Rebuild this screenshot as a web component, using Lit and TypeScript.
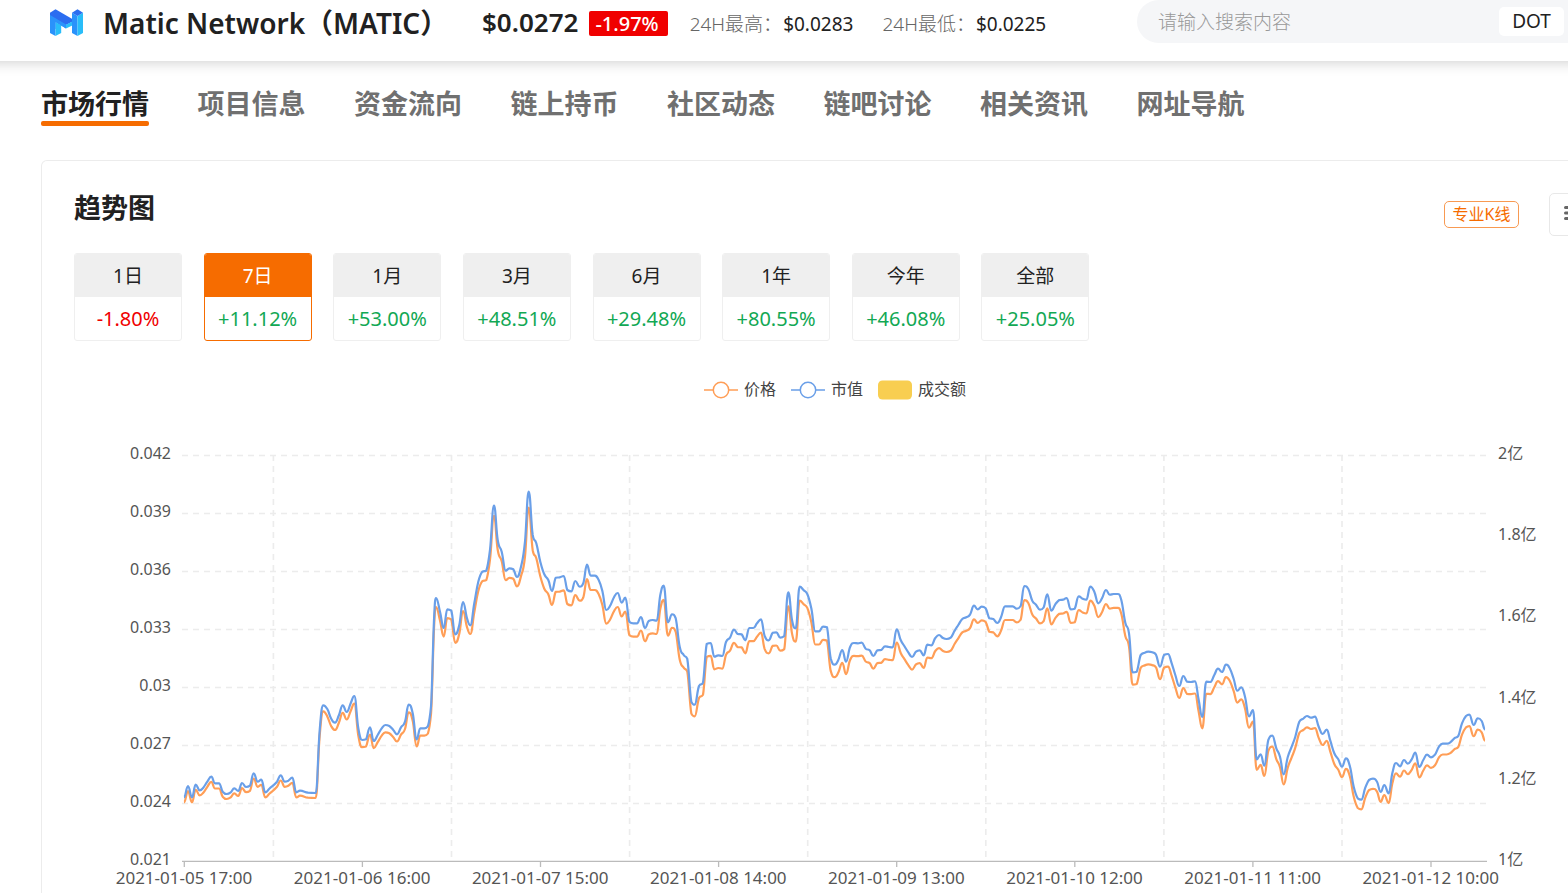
import { LitElement, html, svg, css } from "lit";
import { customElement, state } from "lit/decorators.js";
import { classMap } from "lit/directives/class-map.js";

type Run = { x: number; y: number; pts: number[] };

/* Market-cap samples, grouped in runs. Each run has an origin in chart
   units; its pairs are thirds of a chart unit from that origin. */
const RUNS: Run[] = [
  { x: 110, y: 640, pts: [222,472,234,438,246,472,257,434,269,451,280,443,292,425,304,410,315,430,327,430,338,455,350,462,362,457,373,445,385,453,396,429,408,441,420,437,431,400,443,425,454,419,466,457,478,446,501,425,512,406,524,425,535,422,547,413,559,457,570,452,594,458,617,459,629,270,640,196,652,207,663,235,675,248,687,225,698,196,710,216,722,190,733,168,745,265,756,300,768,298,780,262,791,303,803,285,815,265,826,255,838,258,850,270,861,283,873,262,885,245,896,194,908,220,920,298,931,265,943,265,954,258,963,200] },
  { x: 420, y: 470, pts: [36,640,42,450,48,384,60,425,71,474,82,418,94,422,106,493,118,465,129,396,141,445,151,466,163,400,175,335,187,305,199,302,210,240,222,107,233,210,245,245,257,302,268,295,280,298,291,321,303,290,315,215,326,65,338,195,349,220,361,275,373,313,385,330,396,363,407,323,419,322,431,318,442,360,454,364,466,333,479,350,490,340,501,284,512,317,524,317,536,330,547,362,559,420,570,408,582,382,593,369,605,398,616,383,628,455,640,460,651,460,663,441,675,474,686,453,698,450,710,452,721,375,731,347,744,457,756,433,767,445,779,530,791,555] },
  { x: 640, y: 560, pts: [142,297,154,425,164,434,177,378,189,368,200,252,212,249,223,290,235,286,247,288,258,246,270,233,282,209,293,222,305,223,316,241,328,204,340,204,351,190,363,178,374,228,386,241,398,218,409,217,421,233,433,228,445,97,456,180,467,205,479,80,491,91,502,102,514,145,526,214,537,214,549,200,561,202,572,295,584,314,595,300,607,270,618,305,630,262,642,249,654,250,665,248,677,266,689,271,700,288,712,271,724,270,735,259,747,261,758,262] },
  { x: 880, y: 560, pts: [50,208,62,240,73,258,85,277,96,291,108,275,119,271,131,286,142,254,154,256,166,234,177,225,189,234,200,237,212,233,224,212,235,195,247,177,259,172,270,164,282,137,293,148,305,140,317,145,328,175,340,177,352,189,363,172,375,139,398,139,410,146,422,138,433,78,445,87,457,122,468,134,480,149,491,142,502,103,514,152,526,133,538,120,549,119,560,114,572,148,584,146,596,109,608,116,619,119,631,80,643,95,655,130,666,115,678,90,689,104,701,102,713,102,724,120,736,188] },
  { x: 1120, y: 620, pts: [27,40,38,157,50,155,62,105,74,98,85,95,97,97,108,104,120,140,132,105,144,102,155,130,166,165,178,198,190,168,201,185,213,186,225,184,236,240,247,291,259,185,271,186,283,165,294,146,306,156,318,134,329,145,341,177,352,212,364,202,375,230,387,289,399,270,410,418,422,403,433,437,445,360,457,347,469,385,480,410,491,463,503,412,515,380,526,350,538,305,550,296,561,288,573,293,585,290,596,320,608,342,620,329,631,362,643,400,655,418] },
  { x: 1330, y: 680, pts: [36,260,48,235,60,260,71,320,83,355,94,359,106,323,117,300,129,296,141,305,152,336,163,315,176,340,187,280,198,249,210,259,222,240,233,251,245,238,256,218,268,261,280,240,291,224,303,232,315,224,327,200,338,191,350,191,361,187,373,175,385,168,396,130,408,108,418,104,431,135,443,115,455,123,465,148] },
];

const CAP: [number, number][] = RUNS.flatMap((r) =>
  Array.from({ length: r.pts.length / 2 }, (_, i): [number, number] => [
    r.x + r.pts[2 * i] / 3,
    r.y + r.pts[2 * i + 1] / 3,
  ])
);

/* Both axes reach zero at the same depth, so price is cap over supply. */
const ZERO = 1267;
const supplyRatio = (x: number) => (x < 326 ? 0.9894 : x < 522 ? 0.9865 : 0.9793);
const PRICE = CAP.map(([x, y]): [number, number] => [x, ZERO - (ZERO - y) * supplyRatio(x)]);

/* Rounded curve through the samples: flat at each peak, and with handles
   clamped to the segment so that no peak overshoots its sample. */
function smooth(p: [number, number][]): string {
  const n = p.length;
  const m = p.map((q, i) => {
    if (i === 0 || i === n - 1) return 0;
    const [a, b] = [p[i - 1], p[i + 1]];
    return (q[1] - a[1]) * (b[1] - q[1]) <= 0 ? 0 : (b[1] - a[1]) / (b[0] - a[0]);
  });
  let d = `M${p[0][0].toFixed(1)} ${p[0][1].toFixed(1)}`;
  for (let i = 1; i < n; i++) {
    const [a, b] = [p[i - 1], p[i]];
    const h = (b[0] - a[0]) * 0.45;
    const clamp = (v: number) => Math.max(Math.min(a[1], b[1]), Math.min(Math.max(a[1], b[1]), v));
    d += `C${[a[0] + h, clamp(a[1] + m[i - 1] * h), b[0] - h, clamp(b[1] - m[i] * h), b[0], b[1]]
      .map((v) => v.toFixed(1)).join(" ")}`;
  }
  return d;
}

const CAP_PATH = smooth(CAP);
const PRICE_PATH = smooth(PRICE);

const TABS = ["市场行情", "项目信息", "资金流向", "链上持币", "社区动态", "链吧讨论", "相关资讯", "网址导航"];
const RANGES: [string, string][] = [
  ["1日", "-1.80%"], ["7日", "+11.12%"], ["1月", "+53.00%"], ["3月", "+48.51%"],
  ["6月", "+29.48%"], ["1年", "+80.55%"], ["今年", "+46.08%"], ["全部", "+25.05%"],
];
const LEFT_AXIS = ["0.042", "0.039", "0.036", "0.033", "0.03", "0.027", "0.024", "0.021"];
const RIGHT_AXIS = ["2亿", "1.8亿", "1.6亿", "1.4亿", "1.2亿", "1亿"];
const DATES = [
  "2021-01-05 17:00", "2021-01-06 16:00", "2021-01-07 15:00", "2021-01-08 14:00",
  "2021-01-09 13:00", "2021-01-10 12:00", "2021-01-11 11:00", "2021-01-12 10:00",
];

@customElement("trend-chart")
export class TrendChart extends LitElement {
  static styles = css`
    :host { display: block; }
    .legend { display: flex; justify-content: center; gap: 15px; height: 24px; }
    .key { display: flex; align-items: center; gap: 6px; padding: 0; border: 0; background: none; font: inherit; font-size: 16px; line-height: 24px; color: #444; cursor: pointer; }
    .mark { width: 34px; height: 20px; margin-top: 2px; }
    .plot { display: block; width: 100%; height: auto; }
    .label { font-size: 16px; fill: #555; }
    .date { font-size: 17px; }
    .end { text-anchor: end; }
    .mid { text-anchor: middle; }
    .grid { stroke: #ececec; stroke-width: 1.6; stroke-dasharray: 6 5; fill: none; }
    .axis { stroke: #bbb; stroke-width: 1.3; }
    .line { fill: none; stroke-width: 2.2; stroke-linejoin: round; }
    .price { stroke: #ff9e57; }
    .cap { stroke: #6a9fe8; }
  `;

  private lineKey(color: string) {
    return html`<svg class="mark" viewBox="0 0 34 20" fill="none" stroke=${color} stroke-width="1.5" aria-hidden="true">
      <path d="M0 10H9M25 10H34" /><circle cx="17" cy="10" r="7.7" />
    </svg>`;
  }

  render() {
    return html`
      <div class="legend">
        <button class="key">${this.lineKey("#ff9e57")}价格</button>
        <button class="key">${this.lineKey("#6a9fe8")}市值</button>
        <button class="key">
          <svg class="mark" viewBox="0 0 34 20" aria-hidden="true"><rect y="0.5" width="34" height="19" rx="4.5" fill="#f8ce51" /></svg>成交额
        </button>
      </div>
      <svg class="plot" viewBox="42 401 1586 492" role="img" aria-label="趋势图">
        ${LEFT_AXIS.map((t, i) => svg`
          ${i < 7 ? svg`<path class="grid" d="M182 ${455.5 + i * 58}H1486" />` : ""}
          <text class="label end" x="171" y=${459 + i * 58}>${t}</text>`)}
        ${RIGHT_AXIS.map((t, i) => svg`<text class="label" x="1498" y=${Math.round(459 + i * 81.2)}>${t}</text>`)}
        ${DATES.map((t, i) => svg`
          ${i < 7 ? svg`<path class="grid" d="M${273.4 + i * 178.1} 455V861" />` : ""}
          <path class="axis" d="M${184.3 + i * 178.1} 861V867" />
          <text class="label date mid" x=${184 + i * 178.1} y="884">${t}</text>`)}
        <path class="axis" d="M182 861.3H1487" />
        <path class="line price" d=${PRICE_PATH} />
        <path class="line cap" d=${CAP_PATH} />
      </svg>
    `;
  }
}

@customElement("app-root")
export class AppRoot extends LitElement {
  @state() private tab = 0;
  @state() private range = 1;

  static styles = css`
    :host { display: block; overflow: hidden; background: #fff; color: #212121; font-family: "Noto Sans", "Noto Sans CJK SC", sans-serif; }
    * { box-sizing: border-box; }
    button, input { font-family: inherit; margin: 0; }
    .top { display: flex; align-items: flex-start; height: 61px; margin: 0 -61px; padding-left: 109px; background: #fff; box-shadow: 0 2px 12px rgba(0, 0, 0, 0.18); position: relative; }
    .logo { width: 36px; height: 28px; margin-top: 9px; }
    .name { margin: 0 0 0 19px; width: 379px; font-size: 28px; line-height: 46px; font-weight: 600; white-space: nowrap; }
    .price { font-size: 26px; line-height: 44px; font-weight: 600; }
    .drop { margin: 11px 0 0 11px; padding: 0 9px 0 6px; border-radius: 2px; background: #f00000; color: #fff; font-size: 20px; line-height: 25px; font-weight: 500; }
    .stat { display: flex; margin-left: 22px; font-size: 19px; line-height: 48px; font-weight: 300; color: #666; white-space: nowrap; }
    .stat + .stat { margin-left: 29px; }
    .figure { margin-left: 1px; color: #212121; font-weight: 400; }
    .search { flex: 0 0 492px; display: flex; align-items: center; height: 43px; margin-left: auto; padding-left: 21px; border-radius: 22px 0 0 22px; background: #f5f6f8; }
    .query { width: 341px; padding: 0; border: 0; outline: 0; background: none; font-size: 19px; line-height: 28px; font-weight: 300; color: #212121; }
    .query::placeholder { color: #999; opacity: 1; }
    .hot { width: 65px; height: 29px; padding: 0; border: 0; border-radius: 5px; background: #fff; color: #212121; font-size: 19px; line-height: 29px; }
    .tabs { display: grid; grid-template-columns: repeat(8, 1fr); width: 1252px; margin: 25px 0 0 41px; }
    .tab { justify-self: start; height: 40px; color: #707070; font-size: 27px; line-height: 35px; font-weight: 700; text-decoration: none; white-space: nowrap; }
    .tab.on { color: #212121; }
    .tab.on::after { content: ""; display: block; height: 5px; border-radius: 2px; background: #f66c00; }
    .card { margin: 34px -61px 0 41px; border: 1px solid #ececec; border-bottom: 0; border-radius: 6px 6px 0 0; }
    .head { display: flex; align-items: center; padding: 32px 32px 0; }
    .title { margin: 0; height: 43px; font-size: 27px; line-height: 30px; font-weight: 700; }
    .pro { margin-left: auto; width: 75px; height: 27px; padding: 0; border: 1px solid #f89a52; border-radius: 5px; background: #fff; color: #f66c00; font-size: 16px; line-height: 25px; }
    .menu { display: grid; place-items: start center; width: 47px; height: 43px; margin-left: 30px; padding: 11px 0 0; border: 1px solid #e8e8e8; border-radius: 5px; background: #fff; }
    .bars { width: 20px; height: 16px; }
    .ranges { display: grid; grid-template-columns: repeat(8, 1fr); width: 1037px; margin: 17px 0 0 32px; }
    .range { width: 108px; height: 88px; padding: 0; overflow: hidden; border: 1px solid #efefef; border-radius: 3px; background: #fff; font-size: 19px; color: #212121; }
    .span { display: block; height: 43px; line-height: 44px; background: #efefef; }
    .change { display: block; height: 43px; font-size: 20px; line-height: 44px; color: #12a854; }
    .down { color: #f00000; }
    .range.on { border-color: #f66c00; }
    .range.on .span { background: #f66c00; color: #fff; }
    .trend { margin-top: 36px; }
  `;

  render() {
    return html`
      <header class="top">
        <svg class="logo" viewBox="0 0 36 28" aria-hidden="true">
          <path d="M2 3.700 18 12.500V19.500L7.500 13V27L2 24Z" fill="#2a92fb" />
          <path d="M7.500 13 13.200 16.300V24L7.500 27Z" fill="#29bdf9" />
          <path d="M2 3.700 7.500 .3 24.300 10V12.700L18 16 2 6.500Z" fill="#2b6df0" />
          <path d="M2 6 18 15.500V19.500L7.500 13V20H2Z" fill="#2a92fb" />
          <path d="M18 15.800 24.300 12.500V16.500L18 19.500Z" fill="#29bdf9" />
          <path d="M24 3.700 29.500 7V27L24 24Z" fill="#2a92fb" />
          <path d="M29.500 7 35 3.700V24L29.500 27Z" fill="#29bdf9" />
          <path d="M24 3.700 29.500 .3 35 3.700 29.500 7Z" fill="#2b6df0" />
        </svg>
        <h1 class="name">Matic Network（MATIC）</h1>
        <span class="price">$0.0272</span>
        <span class="drop">-1.97%</span>
        <span class="stat">24H最高：<span class="figure">$0.0283</span></span>
        <span class="stat">24H最低：<span class="figure">$0.0225</span></span>
        <form class="search">
          <input class="query" type="search" placeholder="请输入搜索内容" aria-label="请输入搜索内容" />
          <button class="hot" type="button">DOT</button>
        </form>
      </header>
      <nav class="tabs">
        ${TABS.map((t, i) => html`<a class=${classMap({ tab: true, on: i === this.tab })} href="#"
          @click=${(e: Event) => { e.preventDefault(); this.tab = i; }}>${t}</a>`)}
      </nav>
      <section class="card">
        <div class="head">
          <h2 class="title">趋势图</h2>
          <button class="pro">专业K线</button>
          <button class="menu" aria-label="菜单">
            <svg class="bars" viewBox="0 0 20 16" stroke="#666" stroke-width="3" stroke-linecap="round"><path d="M2.500 2.500H17.500M2.500 8H17.500M2.500 13.500H17.500" /></svg>
          </button>
        </div>
        <div class="ranges">
          ${RANGES.map(([name, change], i) => html`
            <button class=${classMap({ range: true, on: i === this.range })} @click=${() => { this.range = i; }}>
              <span class="span">${name}</span>
              <span class=${classMap({ change: true, down: change.startsWith("-") })}>${change}</span>
            </button>`)}
        </div>
        <trend-chart class="trend"></trend-chart>
      </section>
    `;
  }
}
